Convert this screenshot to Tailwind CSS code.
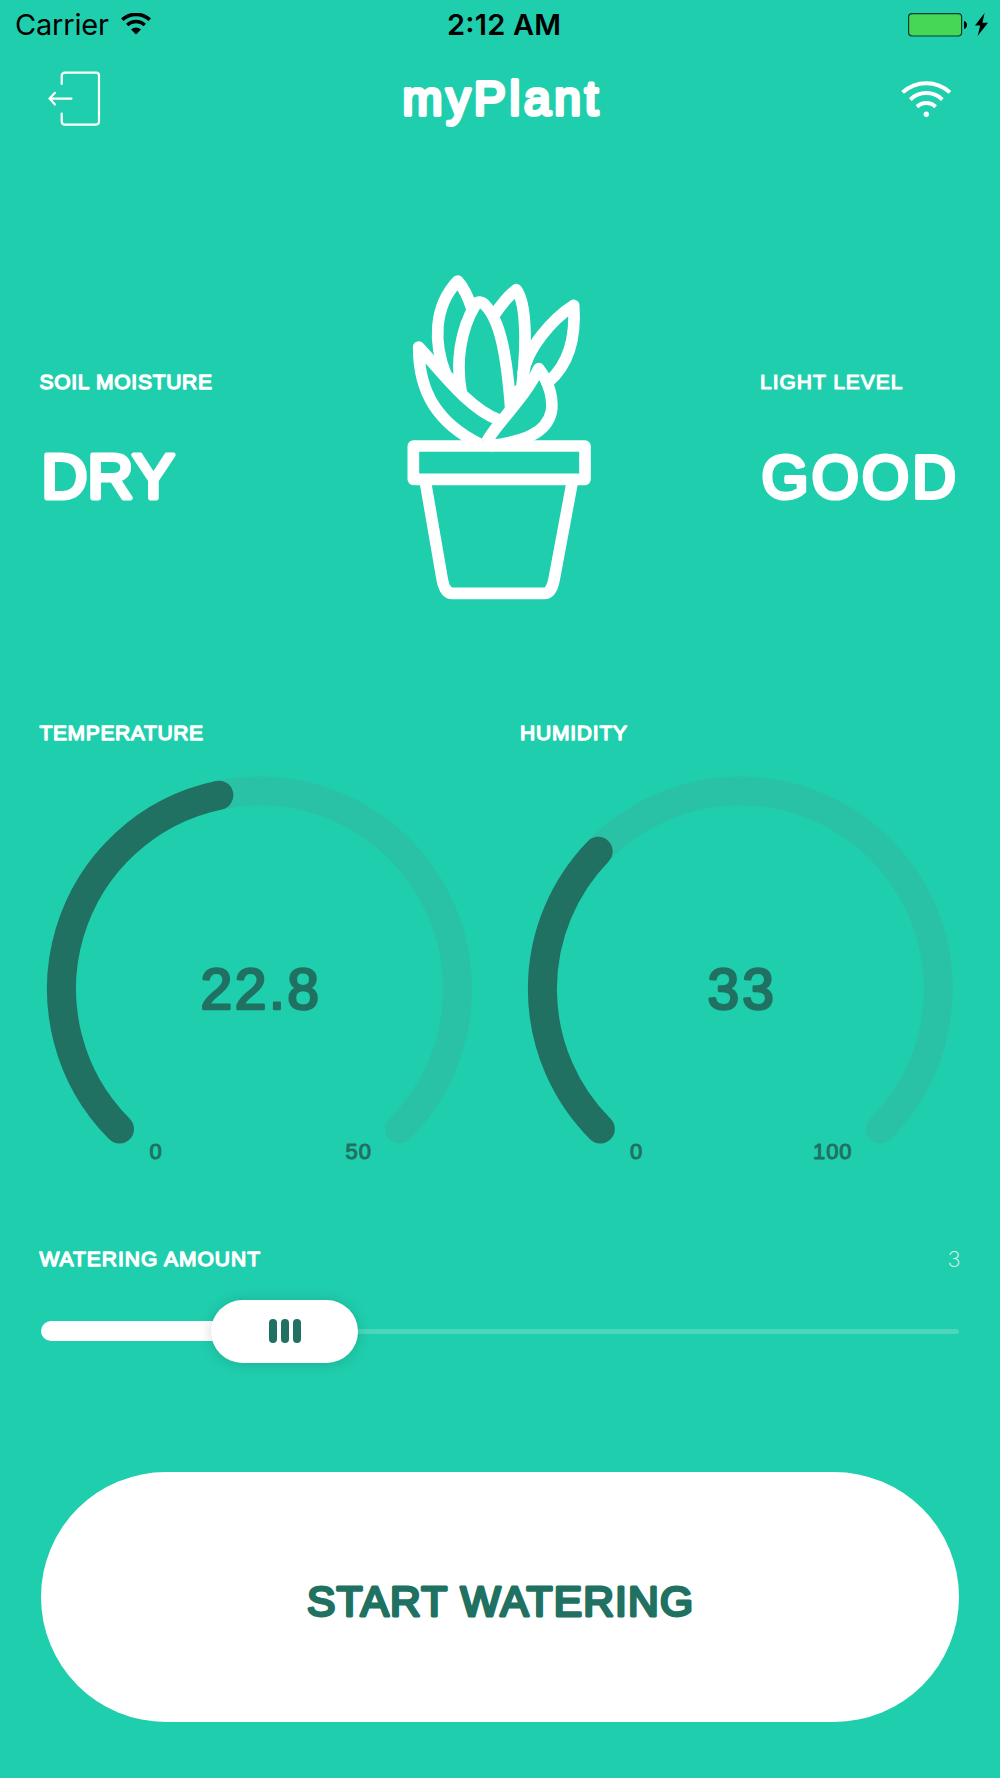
<!DOCTYPE html>
<html lang="en">
<head>
    <meta charset="UTF-8">
    <meta name="viewport" content="width=device-width, initial-scale=1.0">
    <title>myPlant</title>
    <script src="https://cdn.jsdelivr.net/npm/@tailwindcss/browser@4"></script>
</head>
<body class="bg-[#1fcead] w-[1000px] h-[1778px] overflow-hidden flex flex-col font-['Liberation_Sans',sans-serif]">

    <!-- Status Bar -->
    <div class="h-[50px] pl-[15px] pr-3 grid grid-cols-3 items-center text-black text-[29px] leading-[50px] font-['Inter',sans-serif]">
        <div class="flex items-center gap-3">
            <svg class="w-[94px] h-[50px] overflow-visible" fill="#000"><text y="35" textLength="94">Carrier</text></svg>
            <svg class="w-[30px] h-[22px] -mt-0.5" viewBox="0 0 30 22">
                <path d="M1.3 6.8a20 20 0 0 1 27.4 0" fill="none" stroke="#000" stroke-width="3.6"/>
                <path d="M6.2 12a13 13 0 0 1 17.6 0" fill="none" stroke="#000" stroke-width="3.4"/>
                <path d="M10 16.4a7.3 7.3 0 0 1 10 0L15 21.6z"/>
            </svg>
        </div>
        <div class="flex justify-center pl-1.5">
            <svg class="w-[114px] h-[50px] overflow-visible" fill="#000" font-weight="600"><text y="35" textLength="114">2:12 AM</text></svg>
        </div>
        <svg class="w-[80px] h-[24px] justify-self-end" viewBox="0 0 80 24">
            <rect x=".6" y=".6" width="53" height="22.4" rx="3.4" fill="#45d755" stroke="#0b3b30" stroke-width="1.2"/>
            <path d="M56 8c4 1 4 7 0 8z"/>
            <path d="M76.6 0L67 12.6h5.2L69.6 23 80 9.8h-5.6z"/>
        </svg>
    </div>

    <!-- Header -->
    <header class="h-[97px] px-12 flex items-center justify-between">
        <svg class="w-[54px] h-[97px]" viewBox="48 50 54 97" fill="none" stroke="#fff" stroke-width="2.2" stroke-linecap="round" stroke-linejoin="round">
            <path d="M61.7 84V76q0-3.4 3.4-3.4H96q3 0 3 3V121.6q0 3-3 3H65.1q-3.400 0-3.4-3.4V113.5"/>
            <path d="M71.5 98.6H49.5M55 92.8L49.5 98.6 55 104.5"/>
        </svg>
        <h1>
            <svg class="w-[196px] h-[97px] overflow-visible" fill="#fff" stroke="#fff" stroke-width="3.8" stroke-linejoin="round" font-size="48" font-weight="400">
                <text x=".5" y="65" textLength="195.5">myPlant</text>
            </svg>
        </h1>
        <svg class="w-[54px] h-[97px]" viewBox="898 50 54 97" fill="none" stroke="#fff" stroke-width="4">
            <path d="M902.6 92.4A35 35 0 0 1 949.9 92.4M910.3 99.6A23 23 0 0 1 942.3 99.6M917 106.7A13.5 13.5 0 0 1 935.6 106.7"/>
            <circle cx="926.3" cy="114.2" r="2.7" fill="#fff" stroke="none"/>
        </svg>
    </header>

    <!-- Soil / Plant / Light -->
    <section class="h-[553px] pt-[113px] pl-10 flex items-start">
        <div class="w-[350px] pt-[114px] flex flex-col gap-[61px]">
            <svg class="w-[173px] h-[16px] overflow-visible" fill="#fff" stroke="#fff" stroke-width="1.4" stroke-linejoin="round" font-size="21">
                <text x="-.5" y="15.4" textLength="172.5">SOIL MOISTURE</text>
            </svg>
            <svg class="w-[132px] h-[50px] overflow-visible" fill="#fff" stroke="#fff" stroke-width="4.8" stroke-linejoin="round" font-size="63.5">
                <text x="1.500" y="46.8" textLength="133">DRY</text>
            </svg>
        </div>
        <svg class="w-[220px] h-[350px]" viewBox="0 0 660 1050" fill="none" stroke="#fff" stroke-width="35" stroke-linejoin="round">
            <!-- leaves -->
            <path d="M247 150Q228 90 203 63C130 140 130 250 168 345L195 370"/>
            <path d="M215 405C196 310 210 210 257 133Q268 119 285 135C330 180 350 280 363 455"/>
            <path d="M314 163Q350 110 379 89C410 130 412 260 392 410"/>
            <path d="M399 345C408 265 490 175 551 136C557 220 545 305 476 365"/>
            <path d="M325 479C235 445 155 335 86 261C86 400 145 490 270 553"/>
            <path d="M290 546C310 500 405 415 446 326C480 370 490 420 484 455C470 520 400 545 300 557"/>
            <path d="M358 395L378 375 400 370 376 440z" fill="#fff" stroke="none"/>
            <!-- pot -->
            <rect x="70" y="558" width="515" height="100"/>
            <path d="M106 665L157 960Q165 1000 187 1000H463Q484 1000 492 960L547 665"/>
        </svg>
        <div class="pl-[151px] pt-[114px] flex flex-col gap-[61px]">
            <svg class="w-[142px] h-[16px] overflow-visible" fill="#fff" stroke="#fff" stroke-width="1.2" stroke-linejoin="round" font-size="21">
                <text x="-1" y="15.4" textLength="142.5">LIGHT LEVEL</text>
            </svg>
            <svg class="w-[194px] h-[50px] overflow-visible" fill="#fff" stroke="#fff" stroke-width="4.2" stroke-linejoin="round" font-size="60.5">
                <text x=".5" y="47" textLength="194.5">GOOD</text>
            </svg>
        </div>
    </section>

    <!-- Gauges -->
    <section class="h-[535px] pt-[25px] pl-10 grid grid-cols-[480px_480px]">
        <div>
            <svg class="w-[163px] h-[16px] overflow-visible" fill="#fff" stroke="#fff" stroke-width="1.4" stroke-linejoin="round" font-size="21">
                <text x="-.5" y="15.4" textLength="163.5">TEMPERATURE</text>
            </svg>
            <svg class="mt-[35px] w-[440px] h-[400px]" viewBox="40 776 440 400" fill="none" stroke-width="29" stroke-linecap="round">
                <path d="M119.5 1129A198 198 0 1 1 399.5 1129" stroke="#2ac2a7"/>
                <path d="M119.5 1129A198 198 0 0 1 218.9 795.2" stroke="#207161"/>
                <g fill="#207161" stroke="#207161" stroke-linejoin="round">
                    <text x="200.5" y="1008.5" textLength="118.5" font-size="57" stroke-width="2.6">22.8</text>
                    <text x="149.5" y="1159" textLength="13" font-size="22" stroke-width="1">0</text>
                    <text x="345.5" y="1159" textLength="25.5" font-size="22" stroke-width="1">50</text>
                </g>
            </svg>
        </div>
        <div>
            <svg class="w-[107px] h-[16px] overflow-visible" fill="#fff" stroke="#fff" stroke-width="1.4" stroke-linejoin="round" font-size="21">
                <text x="0" y="15.4" textLength="107">HUMIDITY</text>
            </svg>
            <svg class="mt-[35px] w-[440px] h-[400px]" viewBox="520 776 440 400" fill="none" stroke-width="29" stroke-linecap="round">
                <path d="M600.3 1129A198 198 0 1 1 880.3 1129" stroke="#2ac2a7"/>
                <path d="M600.3 1129A198 198 0 0 1 598.2 851.3" stroke="#207161"/>
                <g fill="#207161" stroke="#207161" stroke-linejoin="round">
                    <text x="707.5" y="1008.5" textLength="66.5" font-size="57" stroke-width="2.6">33</text>
                    <text x="630" y="1159" textLength="13" font-size="22" stroke-width="1">0</text>
                    <text x="813" y="1159" textLength="38.5" font-size="22" stroke-width="1">100</text>
                </g>
            </svg>
        </div>
    </section>

    <!-- Watering Amount -->
    <section class="h-[237px] pt-4 px-[41px]">
        <div class="flex items-start justify-between -ml-0.5">
            <svg class="w-[221px] h-[17px] overflow-visible" fill="#fff" stroke="#fff" stroke-width="1.4" stroke-linejoin="round" font-size="21">
                <text x=".5" y="15.4" textLength="220.5">WATERING AMOUNT</text>
            </svg>
            <svg class="w-[12px] h-[17px] overflow-visible font-['Inter',sans-serif]" fill="#fff" fill-opacity=".85" font-size="22" font-weight="200">
                <text x=".5" y="16">3</text>
            </svg>
        </div>
        <div class="mt-[31px] h-[64px] flex items-center">
            <div class="w-[190px] h-5 -mr-5 rounded-l-full bg-white"></div>
            <div class="relative w-[147px] h-[63px] rounded-full bg-white shadow-[0_1px_14px_rgba(0,0,0,0.15)] flex items-center justify-center gap-1">
                <span class="w-2 h-6 rounded-full bg-[#207161]"></span>
                <span class="w-2 h-6 rounded-full bg-[#207161]"></span>
                <span class="w-2 h-6 rounded-full bg-[#207161]"></span>
            </div>
            <div class="flex-1 h-[5px] rounded-r-full bg-white/20"></div>
        </div>
    </section>

    <!-- Start Button -->
    <button class="mx-[41px] h-[250px] rounded-full bg-white flex items-center justify-center">
        <svg class="w-[386px] h-[34px] mt-2 overflow-visible" fill="#207161" stroke="#207161" stroke-width="3" stroke-linejoin="round" font-size="42.5">
            <text x="0" y="32" textLength="386">START WATERING</text>
        </svg>
    </button>

</body>
</html>
